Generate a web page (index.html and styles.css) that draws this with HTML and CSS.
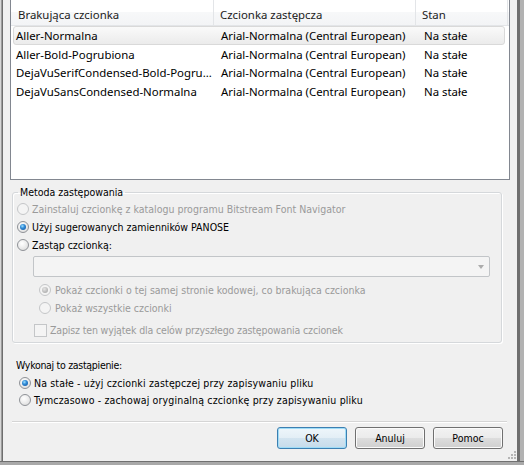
FILE: index.html
```html
<!DOCTYPE html>
<html lang="pl">
<head>
<meta charset="utf-8">
<title>Zastępowanie czcionek</title>
<link rel="stylesheet" href="styles.css">
</head>
<body>
<div class="frame">
  <div class="list">
    <div class="lhead">
      <div class="hc hc1">Brakująca czcionka</div>
      <div class="hc hc2">Czcionka zastępcza</div>
      <div class="hc hc3">Stan</div>
      <div class="hc hc4"></div>
    </div>
    <div class="rows">
      <div class="row sel"><span class="rc1">Aller-Normalna</span><span class="rc2">Arial-Normalna (Central European)</span><span class="rc3">Na stałe</span></div>
      <div class="row"><span class="rc1">Aller-Bold-Pogrubiona</span><span class="rc2">Arial-Normalna (Central European)</span><span class="rc3">Na stałe</span></div>
      <div class="row"><span class="rc1">DejaVuSerifCondensed-Bold-Pogru...</span><span class="rc2">Arial-Normalna (Central European)</span><span class="rc3">Na stałe</span></div>
      <div class="row"><span class="rc1">DejaVuSansCondensed-Normalna</span><span class="rc2">Arial-Normalna (Central European)</span><span class="rc3">Na stałe</span></div>
    </div>
  </div>

  <fieldset class="group">
    <legend class="legend">Metoda zastępowania</legend>
    <div class="opt first dis"><span class="radio dis"></span>Zainstaluj czcionkę z katalogu programu Bitstream Font Navigator</div>
    <div class="opt"><span class="radio on"></span>Użyj sugerowanych zamienników PANOSE</div>
    <div class="opt"><span class="radio"></span>Zastąp czcionką:</div>
    <div class="combo"><span class="arrow"></span></div>
    <div class="opt sub subfirst dis"><span class="radio dis on"></span>Pokaż czcionki o tej samej stronie kodowej, co brakująca czcionka</div>
    <div class="opt sub dis"><span class="radio dis"></span>Pokaż wszystkie czcionki</div>
    <div class="opt chkrow dis"><span class="check"></span>Zapisz ten wyjątek dla celów przyszłego zastępowania czcionek</div>
  </fieldset>

  <div class="label">Wykonaj to zastąpienie:</div>
  <div class="opt main"><span class="radio on"></span>Na stałe - użyj czcionki zastępczej przy zapisywaniu pliku</div>
  <div class="opt main"><span class="radio"></span>Tymczasowo - zachowaj oryginalną czcionkę przy zapisywaniu pliku</div>

  <div class="sep"></div>

  <div class="buttons">
    <button class="btn def">OK</button>
    <button class="btn">Anuluj</button>
    <button class="btn">Pomoc</button>
  </div>

  <svg class="grip" width="10" height="10" viewBox="0 0 10 10">
    <rect x="7" y="1" width="2" height="2" fill="#b5b5b5"/>
    <rect x="4" y="4" width="2" height="2" fill="#b5b5b5"/>
    <rect x="7" y="4" width="2" height="2" fill="#b5b5b5"/>
    <rect x="1" y="7" width="2" height="2" fill="#b5b5b5"/>
    <rect x="4" y="7" width="2" height="2" fill="#b5b5b5"/>
    <rect x="7" y="7" width="2" height="2" fill="#b5b5b5"/>
  </svg>
</div>
</body>
</html>
```
FILE: styles.css
```css
html, body {
  margin: 0;
  padding: 0;
  background: #f0f0f0;
}

.frame {
  position: relative;
  box-sizing: border-box;
  width: 524px;
  height: 465px;
  padding: 0 14px 0 10px;
  overflow: hidden;
  display: flex;
  flex-direction: column;
  font-family: "DejaVu Sans Condensed", "DejaVu Sans", sans-serif;
  font-size: 10.5px;
  color: #000;
  background:
    linear-gradient(to bottom, transparent 461px, #707070 461px 462px, #a9a9a9 462px 465px),
    linear-gradient(to right, #d6d6d6 0 1px, #9c9c9c 1px 2px, #6e6e6e 2px 3px, #f0f0f0 3px 517px, #6f6f6f 517px 520px, #b2b2b2 520px 524px);
}

/* ---------- list view ---------- */
.list {
  margin-top: -1px;
  height: 181px;
  box-sizing: border-box;
  border: 1px solid #828790;
  background: #fff;
  font-family: "Noto Sans", "Open Sans", sans-serif;
  font-size: 11.4px;
}
.lhead {
  display: grid;
  grid-template-columns: 203px 202px 92px 1fr;
  height: 26px;
  box-sizing: border-box;
  border-bottom: 1px solid #e3e5e8;
  background: linear-gradient(#ffffff, #ffffff 50%, #f7f8f9 50%, #f3f4f6);
}
.hc {
  box-sizing: border-box;
  padding-top: 5px;
  line-height: 19px;
  color: #1b1b1b;
  border-right: 1px solid #e3e5e8;
  white-space: nowrap;
}
.hc1 { padding-left: 7px; }
.hc2 { padding-left: 6px; }
.hc3 { padding-left: 6px; }
.hc4 { border-right: none; }

.rows { display: flex; flex-direction: column; }
.row {
  display: grid;
  grid-template-columns: 201px 202px 1fr;
  align-items: center;
  height: 18.75px;
  margin: 0 4px 0 2px;
  box-sizing: border-box;
  border: 1px solid transparent;
  border-radius: 3px;
  white-space: nowrap;
}
.row.sel { border-color: #d9d9d9; background: linear-gradient(#fafafa, #ebebeb); }
.rc1 { padding-left: 2px; }
.rc2 { padding-left: 6px; }
.rc3 { padding-left: 7px; }

/* ---------- group box ---------- */
.group {
  margin: 5px 8px 0 2px;
  padding: 0 0 3px 0;
  min-width: 0;
  border: 1px solid #d5d8db;
  border-radius: 3px;
  box-shadow: 1px 1px 0 #ffffff, inset 1px 1px 0 #ffffff;
}
.legend { margin-left: 5px; padding: 0 2px; line-height: 14px; }

.opt { display: flex; align-items: center; height: 18px; white-space: nowrap; }
.opt.first { margin-top: 1px; }
.opt.dis { color: #9a9a9a; }

.radio {
  position: relative;
  flex: none;
  width: 12px;
  height: 12px;
  box-sizing: border-box;
  margin: 0 3px 0 4px;
  border: 1px solid #8f9297;
  border-radius: 50%;
  background: radial-gradient(circle at 40% 35%, #ffffff 0, #f2f2f2 35%, #d6d6d6 100%);
}
.radio.on::after {
  content: "";
  position: absolute;
  left: 2px; top: 2px; width: 6px; height: 6px;
  border-radius: 50%;
  background: radial-gradient(circle at 40% 35%, #9fe0ff 0, #2f8ad6 40%, #0f4d95 100%);
}
.radio.dis { border-color: #c4c6c8; background: #f4f4f4; }
.radio.dis.on::after { background: radial-gradient(circle at 40% 35%, #e6e6e6 0, #b9b9b9 60%, #a3a3a3 100%); }

.combo {
  display: flex; align-items: center; justify-content: flex-end;
  height: 21px; box-sizing: border-box;
  margin: 2px 11px 0 20px; padding-right: 5px;
  border: 1px solid #c2c5c8; border-radius: 2px; background: #f4f4f4;
}
.arrow {
  width: 0; height: 0;
  border-left: 3.5px solid transparent;
  border-right: 3.5px solid transparent;
  border-top: 4px solid #acacac;
}

.opt.sub .radio { margin: 0 4px 0 26px; }
.opt.subfirst { margin-top: 4px; }
.opt.chkrow { margin-top: 4px; letter-spacing: -0.15px; }
.check {
  flex: none; width: 13px; height: 13px; box-sizing: border-box;
  margin: 0 3px 0 21px;
  border: 1px solid #c4c6c8; background: #f4f4f4;
}

/* ---------- bottom section ---------- */
.label { margin-top: 14px; padding-left: 6px; line-height: 17px; letter-spacing: -0.3px; }
.opt.main { height: 17px; letter-spacing: 0.15px; }
.opt.main .radio { margin: 0 3px 0 9px; }

.sep { margin: 13px 3px 0 2px; border-top: 1px solid #d5d5d5; border-bottom: 1px solid #ffffff; }

.buttons { display: flex; justify-content: flex-end; gap: 8px; margin: 4px 7px 0 0; }
.btn {
  width: 70px; height: 22px; padding: 0; box-sizing: border-box;
  font: inherit; color: #000;
  border: 1px solid #707070; border-radius: 3px;
  background: linear-gradient(#f2f2f2 0%, #ebebeb 50%, #dddddd 50%, #cfcfcf 100%);
  box-shadow: inset 0 0 0 1px #fbfbfb;
}
.btn.def {
  border-color: #3c7fb1;
  background: linear-gradient(#eef6fb 0%, #e3eef6 50%, #d3e4f0 50%, #c6dbea 100%);
  box-shadow: inset 0 0 0 1px #9fdcf7;
}

.grip { position: absolute; right: 7px; bottom: 5px; }
```
